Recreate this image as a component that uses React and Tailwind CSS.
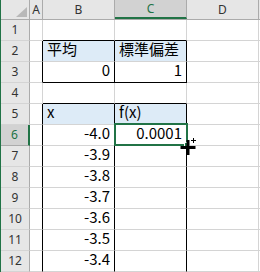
import React from "react";

const G = "#217346";

function HeadCell({ children, className = "" }) {
  return (
    <div className={"h-full flex items-center justify-center border-r border-[#ababab] " + className}>
      {children}
    </div>
  );
}

function Row({ n, a = "", b, c, d = "", selected = false, bText, cText, bAlign = "", cAlign = "" }) {
  return (
    <div className="flex h-[21px]">
      <div
        className={
          "w-[29px] shrink-0 flex items-center justify-center text-[12px] border-b " +
          (selected
            ? "bg-[#d2d2d2] text-[#217346] border-r-2 border-r-[#217346] border-b-[#ababab]"
            : "bg-[#e6e6e6] text-[#333] border-r border-r-[#ababab] border-b-[#d4d4d4]")
        }
        style={{ fontFamily: '"Noto Sans", sans-serif' }}
      >
        {n}
      </div>
      <div className={"w-[13px] shrink-0 " + a} />
      <div className={"w-[72px] shrink-0 flex items-end pb-[1px] px-[4px] " + b}>{bText}</div>
      <div className={"w-[72px] shrink-0 flex items-end pb-[1px] px-[4px] " + c}>{cText}</div>
      <div className={"w-[72px] shrink-0 border-r border-b border-[#d4d4d4] " + d} />
      <div className="flex-1 border-b border-[#d4d4d4]" />
    </div>
  );
}

const cellFont = { fontFamily: '"Noto Sans CJK JP", sans-serif' };

export default function App() {
  const gr = "border-r border-b border-[#d4d4d4]";
  return (
    <div className="relative w-[260px] h-[272px] overflow-hidden bg-white border-l border-[#217346] text-[15px] text-black" style={cellFont}>
      {/* column header */}
      <div className="flex h-[20px] bg-[#e6e6e6] text-[12px] text-[#333] border-b border-[#ababab]" style={{ fontFamily: '"Noto Sans", sans-serif' }}>
        <div className="w-[29px] shrink-0 h-full relative border-r border-[#ababab]">
          <svg className="absolute left-[15px] top-[7px]" width="11" height="10" viewBox="0 0 11 10">
            <polygon points="11,0 11,10 0,10" fill="#b8b8b8" />
          </svg>
        </div>
        <HeadCell className="w-[13px] shrink-0">A</HeadCell>
        <HeadCell className="w-[72px] shrink-0">B</HeadCell>
        <HeadCell className="w-[72px] shrink-0 bg-[#d2d2d2] text-[#217346] border-b-2 border-b-[#217346]">C</HeadCell>
        <HeadCell className="w-[72px] shrink-0">D</HeadCell>
        <div className="flex-1" />
      </div>

      <Row n="1" a={gr} b="border-r border-r-[#d4d4d4] border-b border-b-black" c="border-r border-r-[#d4d4d4] border-b border-b-black" />
      <Row
        n="2"
        a="border-r border-r-black border-b border-b-[#d4d4d4]"
        b="bg-[#ddebf7] border-r border-r-black border-b border-b-[#d4d4d4]"
        c="bg-[#ddebf7] border-r border-r-black border-b border-b-[#d4d4d4]"
        bText={<span>平均</span>}
        cText={<span>標準偏差</span>}
      />
      <Row
        n="3"
        a="border-r border-r-black border-b border-b-[#d4d4d4]"
        b="justify-end border-r border-r-black border-b border-b-black"
        c="justify-end border-r border-r-black border-b border-b-black"
        bText={<span>0</span>}
        cText={<span>1</span>}
      />
      <Row n="4" a={gr} b="border-r border-r-[#d4d4d4] border-b border-b-black" c="border-r border-r-[#d4d4d4] border-b border-b-black" />
      <Row
        n="5"
        a="border-r border-r-black border-b border-b-[#d4d4d4]"
        b="bg-[#ddebf7] border-r border-r-black border-b border-b-[#d4d4d4]"
        c="bg-[#ddebf7] border-r border-r-black border-b border-b-[#d4d4d4]"
        bText={<span>x</span>}
        cText={<span>f(x)</span>}
      />
      {[
        ["6", "-4.0", "0.0001"],
        ["7", "-3.9", ""],
        ["8", "-3.8", ""],
        ["9", "-3.7", ""],
        ["10", "-3.6", ""],
        ["11", "-3.5", ""],
        ["12", "-3.4", ""],
      ].map(([n, x, f]) => (
        <Row
          key={n}
          n={n}
          selected={n === "6"}
          a="border-r border-r-black border-b border-b-[#d4d4d4]"
          b="justify-end border-r border-r-black border-b border-b-[#d4d4d4]"
          c="justify-end border-r border-r-black border-b border-b-[#d4d4d4]"
          bText={<span>{x}</span>}
          cText={<span>{f}</span>}
        />
      ))}

      {/* active cell */}
      <div className="absolute left-[113px] top-[123px] w-[74px] h-[23px] border-2 border-[#217346] pointer-events-none" />
      {/* fill handle */}
      <div className="absolute left-[183px] top-[142px] w-[6px] h-[6px] bg-[#217346] border border-white" />
      {/* cursor */}
      <svg className="absolute left-[179px] top-[138px]" width="20" height="20" viewBox="0 0 20 20">
        <rect x="6.5" y="2" width="3" height="15" fill="#000" />
        <rect x="0.5" y="8" width="15" height="3" fill="#000" />
        <rect x="13" y="0" width="1" height="5" fill="#000" />
        <rect x="11" y="2" width="5" height="1" fill="#000" />
      </svg>
    </div>
  );
}
